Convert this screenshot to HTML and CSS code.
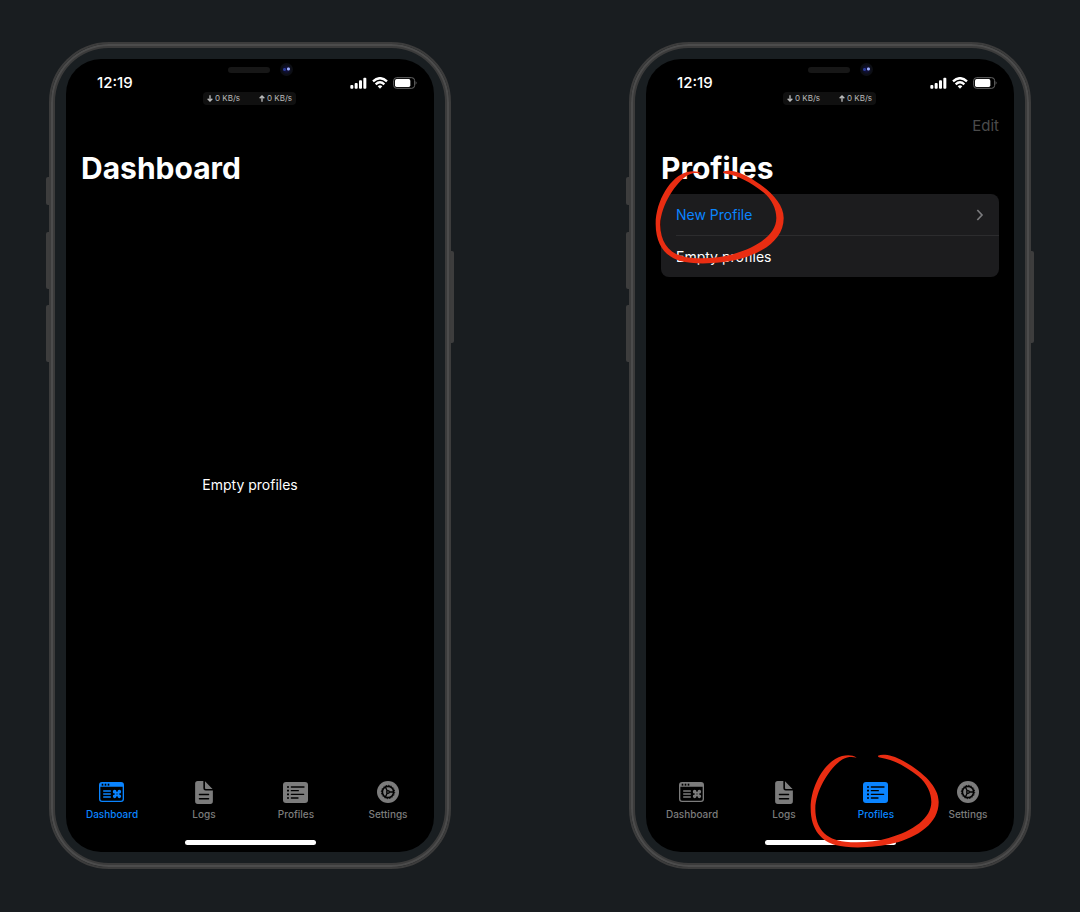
FILE: index.html
```html
<!DOCTYPE html>
<html lang="en">
<head>
<meta charset="utf-8">
<meta name="viewport" content="width=device-width, initial-scale=1">
<title>Dashboard and Profiles</title>
<link rel="stylesheet" href="styles.css">
</head>
<body>
<svg class="defs" aria-hidden="true">
  <symbol id="i-signal" viewBox="0 0 51 36">
    <g fill="currentColor"><rect x="1" y="24" width="9" height="11" rx="3"/><rect x="14" y="18" width="9" height="17" rx="3"/><rect x="27" y="10" width="9" height="25" rx="3"/><rect x="40" y="2" width="9" height="33" rx="3"/></g>
  </symbol>
  <symbol id="i-wifi" viewBox="0 0 48 36">
    <g fill="none" stroke="currentColor" stroke-width="7"><path d="M3 13Q24-6 45 13"/><path d="M11 22Q24 10 37 22"/></g><path fill="currentColor" d="M17 28q7-6 14 0l-7 7z"/>
  </symbol>
  <symbol id="i-battery" viewBox="0 0 72 36">
    <rect x="2" y="2" width="63" height="32" rx="9" fill="none" stroke="#666" stroke-width="3"/><rect x="6" y="6" width="46" height="24" rx="5" fill="currentColor"/><path d="M68 13q5 5 0 10z" fill="#777"/>
  </symbol>
  <symbol id="i-dashboard" viewBox="0 0 78 60">
    <path fill="currentColor" fill-rule="evenodd" d="M9 0h57q9 0 9 9v42q0 9-9 9H9q-9 0-9-9V9Q0 0 9 0zM4 14v37q0 5 5 5h57q5 0 5-5V14z"/>
    <g fill="#000"><rect x="8" y="5" width="5" height="6"/><rect x="17" y="5" width="5" height="6"/><rect x="26" y="5" width="5" height="6"/></g>
    <path stroke="currentColor" stroke-width="4" stroke-linecap="round" d="M14 27h20M14 36h20M14 45h20"/>
    <g fill="none" stroke="currentColor" stroke-width="5"><circle cx="47" cy="29" r="3"/><circle cx="61" cy="29" r="3"/><circle cx="47" cy="43" r="3"/><circle cx="61" cy="43" r="3"/><rect x="50" y="32" width="8" height="8"/></g>
  </symbol>
  <symbol id="i-logs" viewBox="0 0 54 70">
    <path fill="currentColor" d="M8 0h17v22q0 7 7 7h22v33q0 8-8 8H8q-8 0-8-8V8q0-8 8-8zM30 1l23 23H33q-3 0-3-3z"/>
    <path stroke="#000" stroke-width="4" stroke-linecap="round" d="M13 41h28M13 54h28"/>
  </symbol>
  <symbol id="i-profiles" viewBox="0 0 78 63">
    <rect width="75" height="63" rx="9" fill="currentColor"/>
    <g stroke="#000" stroke-width="4"><path stroke-linecap="round" d="M25 15h38M25 26h21M25 37h37M25 48h20"/><path stroke-width="5" d="M12 15h6M12 26h6M12 37h6M12 48h6"/></g>
  </symbol>
  <symbol id="i-settings" viewBox="0 0 66 66">
    <circle cx="33" cy="33" r="33" fill="currentColor"/>
    <g fill="none" stroke="#000"><circle cx="33" cy="33" r="17" stroke-width="5"/><circle cx="33" cy="33" r="20" stroke-width="3" stroke-dasharray="4 3.85"/><circle cx="33" cy="33" r="4" stroke-width="4"/><path stroke-width="4" d="M37 33h12M31 30l-6-12M31 36l-6 12"/></g>
  </symbol>
  <symbol id="i-down" viewBox="0 0 18 21"><path fill="none" stroke="currentColor" stroke-width="4" d="M9 1v17M2 11l7 7 7-7"/></symbol>
  <symbol id="i-up" viewBox="0 0 18 21"><path fill="none" stroke="currentColor" stroke-width="4" d="M9 20V3M2 10l7-7 7 7"/></symbol>
  <symbol id="i-ring" viewBox="0 0 390 285">
    <path fill="#e92d12" d="M140 11C127 2 113 2 96 6C48 18 2 92 2 162C2 231 38 262 76 273C120 285 198 281 250 268C325 249 387 207 386 143C386 97 336 52 280 21C248 3 218-1 204 5C203 9 208 11 213 11C248 16 288 37 325 67C351 89 364 117 364 144C364 192 310 231 236 252C194 264 145 267 106 263C46 257 16 221 16 164C17 105 64 36 98 16C113 8 126 8 140 11z"/>
  </symbol>
</svg>

<main class="stage">
  <section class="phone" aria-label="Dashboard screen">
    <span class="key key-mute"></span><span class="key key-up"></span><span class="key key-down"></span><span class="key key-power"></span>
    <div class="screen">
      <header class="status">
        <time class="clock">12:19</time>
        <div class="notch">
          <div class="sensors"><span class="speaker"></span><span class="camera"></span></div>
          <div class="speed"><span><svg><use href="#i-down"/></svg>0 KB/s</span><span><svg><use href="#i-up"/></svg>0 KB/s</span></div>
        </div>
        <div class="indicators"><svg class="signal"><use href="#i-signal"/></svg><svg class="wifi"><use href="#i-wifi"/></svg><svg class="battery"><use href="#i-battery"/></svg></div>
      </header>
      <div class="toolbar"></div>
      <h1 class="title">Dashboard</h1>
      <div class="content content-empty"><p>Empty profiles</p></div>
      <nav class="tabs" aria-label="Main">
        <a class="tab active" href="#dashboard"><svg class="icon-dashboard"><use href="#i-dashboard"/></svg><span>Dashboard</span></a>
        <a class="tab" href="#logs"><svg class="icon-logs"><use href="#i-logs"/></svg><span>Logs</span></a>
        <a class="tab" href="#profiles"><svg class="icon-profiles"><use href="#i-profiles"/></svg><span>Profiles</span></a>
        <a class="tab" href="#settings"><svg class="icon-settings"><use href="#i-settings"/></svg><span>Settings</span></a>
      </nav>
      <div class="home"></div>
    </div>
  </section>

  <section class="phone" aria-label="Profiles screen">
    <span class="key key-mute"></span><span class="key key-up"></span><span class="key key-down"></span><span class="key key-power"></span>
    <div class="screen">
      <header class="status">
        <time class="clock">12:19</time>
        <div class="notch">
          <div class="sensors"><span class="speaker"></span><span class="camera"></span></div>
          <div class="speed"><span><svg><use href="#i-down"/></svg>0 KB/s</span><span><svg><use href="#i-up"/></svg>0 KB/s</span></div>
        </div>
        <div class="indicators"><svg class="signal"><use href="#i-signal"/></svg><svg class="wifi"><use href="#i-wifi"/></svg><svg class="battery"><use href="#i-battery"/></svg></div>
      </header>
      <div class="toolbar"><button class="edit" type="button" disabled>Edit</button></div>
      <h1 class="title">Profiles</h1>
      <div class="content">
        <div class="list">
          <a class="row row-link" href="#new-profile">New Profile<svg class="chevron" viewBox="0 0 24 36"><path d="M4 3l14 15L4 33"/></svg></a>
          <div class="row">Empty profiles</div>
          <svg class="ring ring-list" aria-hidden="true"><use href="#i-ring"/></svg>
        </div>
      </div>
      <nav class="tabs" aria-label="Main">
        <a class="tab" href="#dashboard"><svg class="icon-dashboard"><use href="#i-dashboard"/></svg><span>Dashboard</span></a>
        <a class="tab" href="#logs"><svg class="icon-logs"><use href="#i-logs"/></svg><span>Logs</span></a>
        <a class="tab active" href="#profiles"><svg class="icon-profiles"><use href="#i-profiles"/></svg><span>Profiles</span><svg class="ring ring-tab" aria-hidden="true"><use href="#i-ring"/></svg></a>
        <a class="tab" href="#settings"><svg class="icon-settings"><use href="#i-settings"/></svg><span>Settings</span></a>
      </nav>
      <div class="home"></div>
    </div>
  </section>
</main>
</body>
</html>
```

FILE: styles.css
```css
* { box-sizing: border-box; }
body {
  margin: 0;
  background: #191d20;
  color: #fff;
  font-family: Inter, "Liberation Sans", sans-serif;
}
h1, p { margin: 0; }
a { color: inherit; text-decoration: none; }
svg { display: block; flex: none; }
.defs { position: absolute; width: 0; height: 0; }

.stage {
  display: grid;
  grid-template-columns: repeat(auto-fit, minmax(320px, 1fr));
  gap: 178px;
  min-height: 100vh;
  padding: 42px 49px 43px;
}
.phone {
  position: relative;
  display: flex;
  padding: 15px;
  border: 2px solid #3c3c3c;
  border-radius: 60px;
  background: #191e21;
  box-shadow: inset 0 0 0 2px #4c4c4c, inset 0 0 0 4px #3b3b3b;
}
.key {
  position: absolute;
  left: -5px;
  width: 3px;
  border-radius: 2px 0 0 2px;
  background: #3d3d3d;
}
.key-mute { top: 133px; height: 28px; }
.key-up { top: 188px; height: 57px; }
.key-down { top: 261px; height: 57px; }
.key-power { left: auto; right: -5px; top: 207px; height: 92px; border-radius: 0 2px 2px 0; }

.screen {
  flex: 1;
  min-width: 0;
  display: flex;
  flex-direction: column;
  padding-bottom: 7px;
  border-radius: 35px;
  background: #000;
}
.status {
  display: grid;
  grid-template-columns: 1fr auto 1fr;
  height: 51px;
  padding: 0 17px 0 31px;
}
.clock { padding-top: 14px; font-size: 15px; line-height: 20px; font-weight: 500; }
.notch { display: flex; flex-direction: column; gap: 16px; padding-top: 4px; margin-right: 15px; }
.sensors { display: flex; align-items: center; gap: 10px; height: 13px; padding-left: 25px; }
.speaker { width: 42px; height: 6px; border-radius: 3px; background: #171717; }
.camera {
  width: 13px;
  height: 13px;
  border-radius: 50%;
  background: radial-gradient(circle at 65% 46%, #a0b0ff 0 1px, transparent 2px), radial-gradient(circle at 35% 50%, #293a96 0 1px, transparent 2px), radial-gradient(circle, #10103a 0 2px, #0c0e14 5px);
}
.speed {
  display: flex;
  justify-content: space-between;
  width: 93px;
  padding: 0 4px;
  border-radius: 4px;
  background: #101010;
  color: #bbb;
  font-size: 8px;
  line-height: 13px;
}
.speed span { display: flex; align-items: center; gap: 2px; }
.speed svg { width: 6px; height: 7px; }
.indicators { display: flex; justify-content: flex-end; gap: 5px; padding-top: 18px; }
.signal { width: 17px; height: 12px; }
.wifi { width: 16px; height: 12px; }
.battery { width: 24px; height: 12px; }

.toolbar { display: flex; justify-content: flex-end; height: 30px; padding: 0 15px; }
.edit { padding: 0; border: 0; background: none; color: #4b4b4b; font: inherit; font-size: 15px; }
.title { padding: 8px 15px 6px; font-size: 30px; line-height: 40px; font-weight: 700; }
.content { flex: 1; padding: 0 15px; font-size: 14px; }
.content-empty { display: grid; place-items: center; }

.list { position: relative; border-radius: 8px; background: #1c1c1e; }
.row { display: flex; align-items: center; justify-content: space-between; height: 41px; margin-left: 15px; padding-right: 15px; }
.row-link { height: 42px; border-bottom: 1px solid #2c2c2e; color: #0a84ff; }
.chevron { width: 8px; height: 12px; fill: none; stroke: #7b7b7e; stroke-width: 5; }

.tabs { display: grid; grid-template-columns: repeat(4, 1fr); padding: 6px 0 20px; }
.tab {
  position: relative;
  display: grid;
  grid-template-rows: 24px 12px;
  gap: 4px;
  place-items: center;
  color: #7c7c7c;
  font-size: 10px;
  line-height: 12px;
  font-weight: 500;
}
.active { color: #0a84ff; }
.icon-dashboard { width: 26px; height: 20px; }
.icon-logs { width: 18px; height: 23px; }
.icon-profiles { width: 26px; height: 21px; }
.icon-settings { width: 22px; height: 22px; }
.home { align-self: center; width: 131px; height: 5px; border-radius: 3px; background: #fff; }

.ring { position: absolute; z-index: 1; width: 130px; height: 95px; pointer-events: none; }
.ring-list { left: -6px; top: -24px; }
.ring-tab { left: calc(50% - 66px); top: -26px; }
```
